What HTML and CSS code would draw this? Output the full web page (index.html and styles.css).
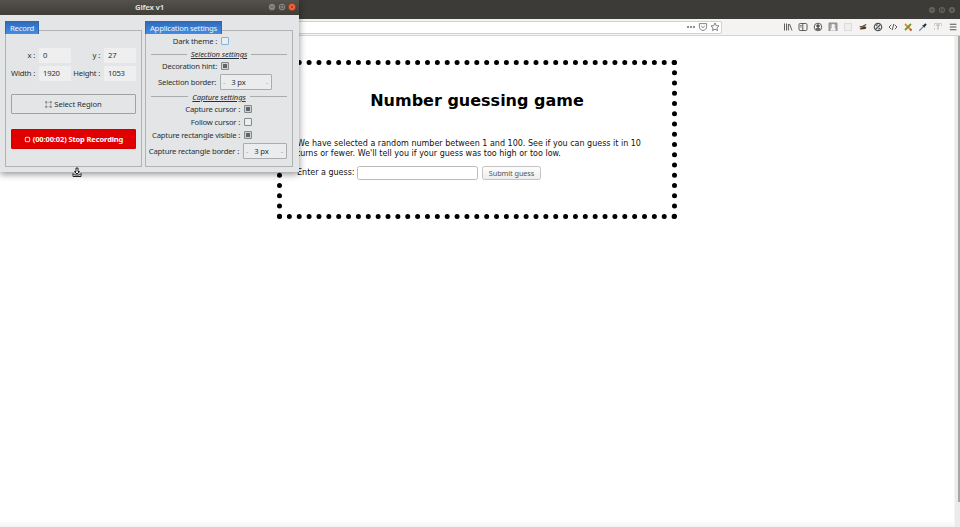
FILE: index.html
```
<!DOCTYPE html>
<html lang="en">
<head>
<meta charset="utf-8">
<title>Number guessing game</title>
<link rel="stylesheet" href="styles.css">
</head>
<body>
<div class="desktop">
  <header class="browser-title">
    <span class="wm dim"><svg viewBox="0 0 8 8"><circle cx="4" cy="4" r="3.6"/><path d="M2.4 4h3.2"/></svg></span>
    <span class="wm dim"><svg viewBox="0 0 8 8"><circle cx="4" cy="4" r="3.6"/><path d="M2.5 3h3v2h-3z"/></svg></span>
    <span class="wm dim"><svg viewBox="0 0 8 8"><circle cx="4" cy="4" r="3.6"/><path d="M2.8 2.8l2.4 2.4M5.2 2.8L2.8 5.2"/></svg></span>
  </header>
  <nav class="toolbar">
    <div class="urlbar">
      <svg class="ic" viewBox="0 0 10 10"><g fill="#777" stroke="none"><circle cx="2" cy="5" r="1.1"/><circle cx="5" cy="5" r="1.1"/><circle cx="8" cy="5" r="1.1"/></g></svg>
      <svg class="ic" viewBox="0 0 10 10"><path d="M1.4 1.6h7.2v3.2c0 2-1.6 3.6-3.6 3.6S1.4 6.800 1.400 4.800zM3.200 4l1.800 1.700L6.800 4"/></svg>
      <svg class="ic" viewBox="0 0 10 10"><path d="M5 1l1.200 2.600 2.800.3-2.100 1.900.6 2.800L5 7.200 2.500 8.600l.6-2.800L1 3.900l2.800-.3z"/></svg>
    </div>
    <div class="tools">
      <svg class="ic dark" viewBox="0 0 10 10"><path d="M1.500 1.500v7M3.500 1.500v7M5.400 2v6.500M6.500 2l2.500 6.500"/></svg>
      <svg class="ic dark" viewBox="0 0 10 10"><rect x="1" y="1.500" width="8" height="7" rx="1.200"/><path d="M4.800 1.500v7M2.300 3.500h1.300M2.300 5h1.300"/></svg>
      <svg class="ic dark" viewBox="0 0 10 10"><circle cx="5" cy="5" r="3.800"/><circle cx="5" cy="4" r="1.300" fill="#555"/><path d="M2.800 7.300c1-1.500 3.400-1.500 4.400 0z" fill="#555"/></svg>
      <svg class="ic" viewBox="0 0 10 10"><path fill="#aaa" stroke="none" d="M1 1h8v8H1z"/><path fill="#f4f4f4" stroke="none" d="M2.500 8.500c0-2 1-2.500 1.500-3C3.200 4 3.500 2 5.200 2s2 2 1.200 3.500c1 .5 1.300 1.500 1.300 3z"/><path stroke="#777" d="M1 1h8v8M1 1v8"/></svg>
      <svg class="ic" viewBox="0 0 10 10"><rect x="1.500" y="1.500" width="7" height="7" fill="#efeeed" stroke="#bbb" stroke-dasharray="1 1"/></svg>
      <svg class="ic" viewBox="0 0 10 10"><path fill="#443c32" stroke="none" d="M1 4.500l3-.6L8 2l.5.6-2 2 2 .4-1 2-5 .6-1-.8 2-1z"/><path stroke="#c9792c" d="M2 6l5-2.200"/></svg>
      <svg class="ic dark" viewBox="0 0 10 10"><circle cx="5" cy="5" r="3.700" stroke-width="1.200"/><path stroke-width="1.200" d="M2.500 7.500l5-5M3 4l1.500-1.500M5.500 7.500L7 6"/></svg>
      <svg class="ic dark" viewBox="0 0 10 10"><path d="M3.200 2.800L1 5l2.200 2.200M6.800 2.800L9 5 6.800 7.200M5.800 2L4.200 8"/></svg>
      <svg class="ic" viewBox="0 0 10 10"><path stroke="#d8953a" stroke-width="2" d="M2 2l6 6"/><path stroke="#6c9a37" stroke-width="1.800" d="M8 2L2 8"/><path stroke="#bb4c31" stroke-width="1.800" d="M7.200 7.200L8.500 8.500"/></svg>
      <svg class="ic" viewBox="0 0 10 10"><path stroke="#6d91b3" stroke-width="1.300" d="M1.200 8.800L5.500 4.500"/><path stroke="#28313b" stroke-width="2.200" d="M5.500 4.500L8 2"/><path stroke="#28313b" d="M4.500 3.300l2.300 2.300"/></svg>
      <svg class="ic" viewBox="0 0 10 10"><path stroke="#c3c3c3" d="M1.500 4V1.500h7V4M1.500 6v2"/><path stroke="#999" d="M3.300 3h3.400M5 3v4.700"/></svg>
      <svg class="ic dark" viewBox="0 0 10 10"><path stroke-width="1.100" d="M1.800 2.300h6.600M1.800 5h6.600M1.800 7.700h6.600"/></svg>
    </div>
  </nav>
  <main class="page">
    <section class="game">
      <h1>Number guessing game</h1>
      <p>We have selected a random number between 1 and 100. See if you can guess it in 10<br>turns or fewer. We'll tell you if your guess was too high or too low.</p>
      <form class="guess"><label for="guess">Enter a guess:</label><input id="guess" type="text"><button type="button">Submit guess</button></form>
    </section>
    <div class="scrollbar"><div class="thumb"></div></div>
  </main>

  <div class="app">
    <header class="app-title"><span>Gifex v1</span>
      <div class="controls">
        <span class="wm"><svg viewBox="0 0 8 8"><circle cx="4" cy="4" r="3.700"/><path d="M2.400 4h3.200"/></svg></span>
        <span class="wm"><svg viewBox="0 0 8 8"><circle cx="4" cy="4" r="3.700"/><path d="M2.600 2.600h2.800v2.800H2.600z"/></svg></span>
        <span class="wm close"><svg viewBox="0 0 8 8"><circle cx="4" cy="4" r="3.700"/><path d="M2.700 2.700l2.600 2.600M5.300 2.700L2.700 5.300"/></svg></span>
      </div>
    </header>
    <div class="panels">
      <section class="panel record">
        <h2>Record</h2>
        <div class="frame">
          <div class="fields">
            <label>x :</label><div class="entry">0</div><label>y :</label><div class="entry">27</div>
            <label>Width :</label><div class="entry">1920</div><label>Height :</label><div class="entry">1053</div>
          </div>
          <div class="btn region"><svg viewBox="0 0 8 8"><path d="M1.500 1.500h5v5h-5z" stroke-dasharray="1 .8"/><path d="M.5.500h1.600v1.600H.5zM5.900.500h1.600v1.600H5.900zM.5 5.900h1.600v1.600H.5zM5.900 5.900h1.600v1.600H5.900z"/></svg><span>Select Region</span></div>
          <div class="btn stop"><svg viewBox="0 0 8 8"><rect x="1.500" y="1.500" width="5" height="5" rx=".8"/></svg><span>(00:00:02) Stop Recording</span></div>
        </div>
      </section>
      <section class="panel settings">
        <h2>Application settings</h2>
        <div class="frame">
          <div class="row near r13"><label>Dark theme :</label><i class="check focus"></i></div>
          <div class="divider"><span>Selection settings</span></div>
          <div class="row near r13"><label>Decoration hint:</label><i class="check on"></i></div>
          <div class="row near spinrow"><label>Selection border:</label><div class="spin wide"><b>-</b><span>3 px</span><b>-</b></div></div>
          <div class="divider second"><span>Capture settings</span></div>
          <div class="row r13"><label>Capture cursor :</label><i class="check on"></i></div>
          <div class="row r13"><label>Follow cursor :</label><i class="check"></i></div>
          <div class="row r13"><label>Capture rectangle visible :</label><i class="check on"></i></div>
          <div class="row spinrow"><label>Capture rectangle border :</label><div class="spin"><b>-</b><span>3 px</span><b>-</b></div></div>
        </div>
      </section>
    </div>
  </div>
  <svg class="pointer" viewBox="0 0 10 11"><path d="M4 1h2v3.500h1.500L5 7 2.500 4.500H4zM1 6.500v3h8v-3L7.500 8h-5z"/></svg>
</div>
</body>
</html>
```
FILE: styles.css
```
* { box-sizing: border-box; }
body { margin: 0; overflow: hidden; background: #fff; }
svg { display: block; fill: none; stroke: #666; stroke-width: .8; }
.desktop { position: relative; width: 960px; height: 527px; display: flex; flex-direction: column; overflow: hidden; }
.browser-title { height: 19px; flex: none; background: #3c3b37; display: flex; justify-content: flex-end; align-items: center; gap: 2px; padding-right: 4px; }
.wm { width: 8px; height: 8px; flex: none; }
.wm svg { width: 8px; height: 8px; fill: #8a8880; stroke: #393833; stroke-width: .6; }
.dim svg { fill: #64635d; stroke: #302f2c; }
.close svg { fill: #f4623a; stroke: #6c301d; }
.toolbar { height: 17px; flex: none; display: flex; background: #f4f3f2; border-bottom: 1px solid #d6d4d2; justify-content: space-between; align-items: center; padding-right: 2px; }
.urlbar { width: 722px; height: 13px; background: #fff; border: 1px solid #d4d2d0; border-radius: 2px; display: flex; align-items: center; justify-content: flex-end; gap: 2px; padding-right: 1px; }
.ic { width: 10px; height: 10px; }
.dark { stroke: #555; stroke-width: .95; }
.tools { display: flex; gap: 5px; }
.page { flex: 1; display: flex; justify-content: space-between; background: linear-gradient(to bottom, transparent 484px, #f3f3f3 491px), #fff; font-family: "DejaVu Sans", sans-serif; font-size: 8px; line-height: 10px; color: #111; }
.game { width: 400px; height: 159px; margin: 24px 0 0 277px; border: 5px dotted #000; padding: 0 15px; }
.game h1 { font-size: 16px; line-height: 20px; text-align: center; margin: 26px 0 0; color: #000; }
.game p { margin: 28px 0 0; white-space: nowrap; }
.guess { display: flex; align-items: center; margin-top: 7px; height: 14px; }
.guess label { width: 60px; white-space: nowrap; }
.guess input { width: 121px; height: 14px; border: 1px solid #bdbbb8; border-radius: 2.500px; padding: 0; background: #fff; }
.guess button { width: 59px; height: 14px; margin-left: 4px; border: 1px solid #c5c2bf; border-radius: 2.500px; padding: 0; background: linear-gradient(#fdfdfd, #ededed); color: #555; font: 7.300px/12px "Noto Sans", sans-serif; letter-spacing: -.08px; white-space: nowrap; }
.scrollbar { width: 6px; background: #ecebea; border-left: 1px solid #f5f4f3; padding-left: 3px; }
.thumb { height: 466px; background: #a5a7a7; }
.app { position: absolute; left: 0; top: 0; width: 299px; height: 172px; background: #e3e5e6; box-shadow: 0 2px 7px rgba(0,0,0,.45); font-family: "Noto Sans", sans-serif; font-size: 7.700px; letter-spacing: -.2px; line-height: 12px; color: #2c3034; }
.app-title { height: 15px; background: linear-gradient(#55524b, #3f3d38); display: grid; grid-template-columns: 1fr; align-items: center; padding-bottom: 1px; }
.app-title > * { grid-area: 1 / 1; }
.app-title > span { text-align: center; color: #dfdbd2; font-weight: 700; }
.controls { display: flex; justify-content: flex-end; gap: 2px; padding-right: 3px; }
.panels { display: flex; gap: 3px; padding: 6px 6px 0 5px; }
.panel h2 { margin: 0; width: 34px; height: 13px; background: linear-gradient(#306bb9, #438de4); border: 1px solid #2f68b1; border-bottom: 0; color: #edf5ff; font: 400 7.700px/12px "Noto Sans", sans-serif; text-align: center; white-space: nowrap; position: relative; z-index: 1; }
.record { width: 137px; }
.settings { width: 149px; }
.settings h2 { width: 77px; }
.frame { margin-top: -4px; height: 137px; border: 1px solid #b0b3b5; padding: 0 5px; }
.fields { display: grid; grid-template-columns: 24px 32px 25px 32px; column-gap: 4px; row-gap: 3px; margin: 17px 0 0; }
.fields label { white-space: nowrap; line-height: 15px; justify-self: end; }
.entry { height: 15px; line-height: 15px; background: #efefef; padding-left: 4px; }
.btn { height: 20px; margin-top: 13px; border: 1px solid #9fa2a5; border-radius: 1px; display: flex; align-items: center; justify-content: center; gap: 2px; white-space: nowrap; }
.btn svg { width: 7px; height: 7px; stroke-width: .6; }
.region { letter-spacing: -.1px; }
.stop { margin-top: 15px; background: #e10000; border-color: #d00000; color: #fff; font-weight: 700; font-size: 7.500px; letter-spacing: -.12px; }
.stop svg { stroke: #fff; stroke-width: 1; }
.settings .frame { padding: 4px 5px 0; }
.row { display: flex; align-items: center; justify-content: flex-end; gap: 4px; white-space: nowrap; }
.r13 { height: 13px; padding-right: 35px; }
.near.r13 { height: 12px; padding-right: 58px; }
.near.r13:first-child { height: 13px; padding-bottom: 1px; }
.check { width: 8px; height: 8px; border: 1px solid #85898c; border-radius: 1px; background: #eceded; }
.on { background: #626568; box-shadow: inset 0 0 0 1px #d0d1d2; }
.focus { border-color: #82b4e2; }
.divider { display: flex; align-items: center; gap: 4px; height: 12px; font-style: italic; letter-spacing: -.14px; text-decoration: underline; white-space: nowrap; }
.divider::before, .divider::after { content: ""; height: 1px; flex: 1; background: #a9acae; }
.second { height: 11px; }
.spinrow { height: 19px; }
.spinrow label { margin-left: -4px; }
.near.spinrow { padding-right: 15px; }
.spin { flex: none; width: 44px; height: 16px; display: flex; align-items: center; border: 1px solid #aaadb0; border-radius: 1px; background: #ebeced; padding: 0 3px 0 2px; }
.spin span { margin-left: 6px; }
.spin b { font-weight: 400; color: #aaa; }
.spin b:last-child { margin-left: auto; }
.wide { width: 52px; }
.pointer { position: absolute; left: 72px; top: 167px; width: 10px; height: 11px; fill: #fff; stroke: #222; stroke-width: 1; }
```
